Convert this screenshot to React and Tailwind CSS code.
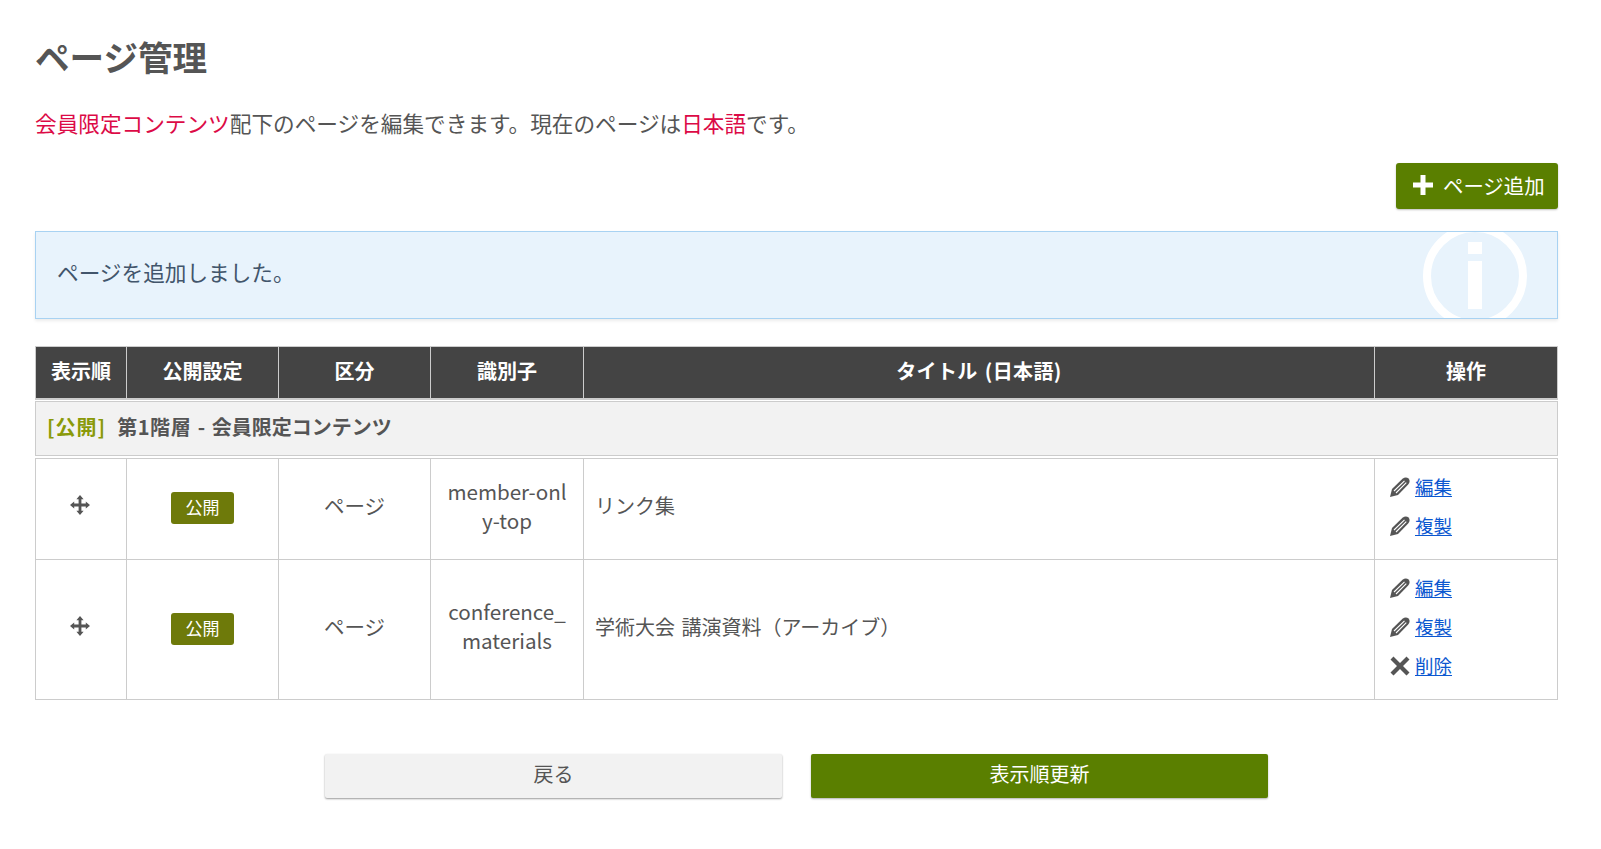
const gridCols = "grid grid-cols-[91px_152px_152px_153px_791px_182px]";
const font = "font-['Noto_Sans_CJK_JP','Noto_Sans',sans-serif]";

// glyphicon style drawings
const MoveIcon = () => (
  <svg viewBox="0 0 20 20" className="w-[20px] h-[20px] fill-[#555]">
    <path d="M10 0l3.6 4.2h-2.2v4.400h4.400V6.400L20 10l-4.200 3.600v-2.200h-4.400v4.400h2.200L10 20l-3.600-4.200h2.200v-4.400H4.200v2.200L0 10l4.200-3.600v2.200h4.400V4.200H6.400z" />
  </svg>
);

const PencilIcon = () => (
  <svg viewBox="0 0 20 20" className="w-[20px] h-[20px] shrink-0">
    <path fill="#555" d="M0 20l2-8L12.500 1.800C14.500 0 17 0 18.500 1.500s1.500 4-.3 6L8 18z" />
    <path stroke="white" strokeWidth="1.100" fill="none" d="M4 14L14.500 3.800M6 16L16.300 5.600" />
  </svg>
);

const CrossIcon = () => (
  <svg viewBox="0 0 20 20" className="w-[20px] h-[20px] fill-[#555] shrink-0">
    <path d="M3.500 0.500L10 7l6.500-6.500 3 3L13 10l6.500 6.500-3 3L10 13l-6.500 6.500-3-3L7 10 .5 3.500z" />
  </svg>
);

const PlusIcon = () => (
  <svg viewBox="0 0 20 20" className="w-[20px] h-[20px] fill-white shrink-0">
    <path d="M7.500 0h5v7.500H20v5h-7.500V20h-5v-7.500H0v-5h7.500z" />
  </svg>
);

const OpLink = ({ icon, label }) => (
  <div className="flex items-center gap-[5px] h-[39px]">
    {icon}
    <a href="#" className="text-[18.500px] leading-none text-[#0b57d0] underline underline-offset-2">
      {label}
    </a>
  </div>
);

const Row = ({ id, title, ops, height }) => (
  <div className={`${gridCols} border-x border-b border-[#ccc] text-[20px] ${height}`}>
    <div className="flex items-center justify-center border-r border-[#ccc] pb-2 pr-[2px]">
      <MoveIcon />
    </div>
    <div className="flex items-center justify-center border-r border-[#ccc] pb-[2px]">
      <span className="bg-[#6e7a0a] text-white text-[17px] rounded-[3px] w-[63px] h-[32px] pb-[2px] flex items-center justify-center">
        公開
      </span>
    </div>
    <div className="flex items-center justify-center border-r border-[#ccc] pb-[7px] text-[20.500px]">ページ</div>
    <div className="flex items-center justify-center border-r border-[#ccc] pb-[7px] px-4 text-center break-all leading-[29px] text-[20.600px]">
      {id}
    </div>
    <div className="flex items-center border-r border-[#ccc] px-[11px] pb-[6px] [word-spacing:2px]">{title}</div>
    <div className="flex flex-col justify-center px-[15px] pb-[6px]">{ops}</div>
  </div>
);

export default function App() {
  return (
    <div className={`${font} pl-[35px] pr-[43px] h-[849px] bg-white text-[#555] overflow-hidden`}>
      <h1 className="pt-[31px] text-[34.600px] font-bold leading-[50px]">ページ管理</h1>

      <p className="mt-[26px] text-[21.650px] leading-[32px]">
        <span className="text-[#dc0a46]">会員限定コンテンツ</span>
        配下のページを編集できます。現在のページは
        <span className="text-[#dc0a46]">日本語</span>
        です。
      </p>

      <div className="flex justify-end mt-[24px]">
        <button className="flex items-center gap-[10px] w-[162px] h-[46px] pl-[17px] pb-[2px] bg-[#5a7f00] text-white text-[20.400px] rounded-[3px] shadow-[0_1px_2px_rgba(0,0,0,0.25)]">
          <PlusIcon />
          ページ追加
        </button>
      </div>

      <div className="relative mt-[22px] h-[88px] flex items-center pl-[21px] pb-[6px] overflow-hidden bg-[#e8f3fc] border border-[#a8d2f2] text-[21.650px] text-[#42556b] shadow-[0_2px_3px_rgba(0,0,0,0.08)]">
        ページを追加しました。
        <svg viewBox="0 0 104 104" className="absolute left-[1387px] top-[-8px] w-[104px] h-[104px]">
          <circle cx="52" cy="52" r="48" fill="none" stroke="white" strokeWidth="8" />
          <rect x="45" y="18" width="14" height="12" fill="white" />
          <rect x="45" y="37" width="14" height="48" fill="white" />
        </svg>
      </div>

      <div className="mt-[27px]">
        <div className={`${gridCols} h-[54px] bg-[#444] text-white font-bold text-[20px] border border-[#ccc] border-b-2`}>
          {["表示順", "公開設定", "区分", "識別子"].map((label) => (
            <div key={label} className="flex items-center justify-center border-r border-[#ccc] pb-[3px]">
              {label}
            </div>
          ))}
          <div className="flex items-center justify-center border-r border-[#ccc] pb-[3px] tracking-[0.4px] [word-spacing:2px]">
            タイトル (日本語)
          </div>
          <div className="flex items-center justify-center pb-[3px]">操作</div>
        </div>

        <div className="mt-px h-[55px] flex items-center gap-[11px] px-[11px] pb-1 bg-[#f2f2f2] border border-[#ccc] font-bold text-[20px]">
          <span className="text-[#8a9a0a] tracking-[1px]">[公開]</span>
          <span className="[word-spacing:2px]">
            <span className="tracking-[0.6px]">第1階層</span> - 会員限定コンテンツ
          </span>
        </div>

        <div className="mt-[2px] border-t border-[#ccc]">
          <Row
            id="member-only-top"
            title="リンク集"
            height="h-[101px]"
            ops={
              <>
                <OpLink icon={<PencilIcon />} label="編集" />
                <OpLink icon={<PencilIcon />} label="複製" />
              </>
            }
          />
          <Row
            id="conference_materials"
            title="学術大会 講演資料（アーカイブ）"
            height="h-[140px]"
            ops={
              <>
                <OpLink icon={<PencilIcon />} label="編集" />
                <OpLink icon={<PencilIcon />} label="複製" />
                <OpLink icon={<CrossIcon />} label="削除" />
              </>
            }
          />
        </div>
      </div>

      <div className="flex justify-center gap-[29px] mt-[54px]">
        <button className="w-[457px] h-[44px] pb-[4px] bg-[#f2f2f2] text-[20px] text-[#555] rounded-[2px] shadow-[0_1px_2px_rgba(0,0,0,0.4)]">
          戻る
        </button>
        <button className="w-[457px] h-[44px] pb-[4px] bg-[#5a7f00] text-[20px] text-white rounded-[2px] shadow-[0_1px_2px_rgba(0,0,0,0.3)]">
          表示順更新
        </button>
      </div>
    </div>
  );
}
